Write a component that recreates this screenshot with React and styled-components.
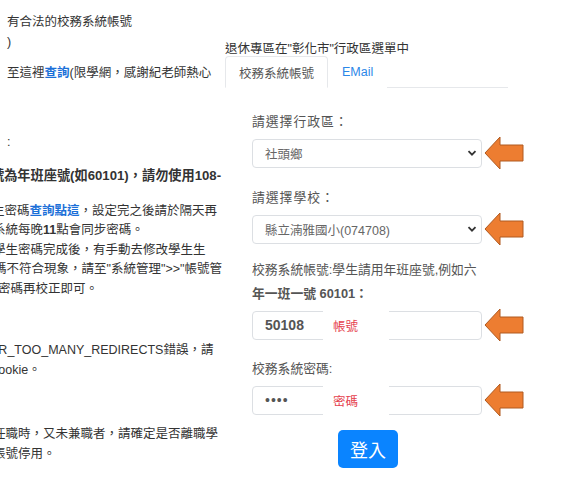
import styled, { createGlobalStyle } from "styled-components";

const GlobalStyle = createGlobalStyle`
  html, body {
    margin: 0;
    padding: 0;
    background: #fff;
  }
  body {
    font-family: "Liberation Sans", "Noto Sans CJK TC", sans-serif;
    color: #333;
  }
`;

const Page = styled.div`
  display: flex;
  width: 576px;
  height: 483px;
  overflow: hidden;
`;

const Notes = styled.div`
  width: 225px;
  flex: none;
  padding: 13px 0 0 7px;
  box-sizing: border-box;
  font-size: 12.5px;
  color: #333;
`;

const Para = styled.div`
  margin-top: ${(p) => p.$gap || 0}px;
`;

const Line = styled.div`
  white-space: nowrap;
  height: 19.5px;
  line-height: 19.5px;
  margin-left: ${(p) => p.$shift || 0}px;
  font-size: ${(p) => p.$size || 12.5}px;
  font-weight: ${(p) => (p.$bold ? 700 : 400)};
`;

const Link = styled.span`
  color: #1a6fd8;
  font-weight: 700;
`;

const Panel = styled.div`
  width: 300px;
  flex: none;
  padding-top: 43px;
`;

const Hint = styled.div`
  font-size: 12.5px;
  height: 13px;
  line-height: 13px;
  color: #333;
`;

const Tabs = styled.ul`
  display: flex;
  list-style: none;
  margin: 0;
  padding: 0;
  width: 283px;
  border-bottom: 1px solid #e6e8eb;
`;

const Tab = styled.li`
  height: 30px;
  padding: 0 13px;
  display: flex;
  align-items: center;
  font-size: 12.5px;
  margin-bottom: -1px;
  border: 1px solid ${(p) => (p.$active ? "#e6e8eb" : "transparent")};
  border-bottom-color: ${(p) => (p.$active ? "#fff" : "transparent")};
  border-radius: 4px 4px 0 0;
  color: ${(p) => (p.$active ? "#555" : "#2b87e8")};
  background: #fff;
`;

const Form = styled.form`
  padding: 22px 0 0 27px;
  display: flex;
  flex-direction: column;
`;

const Label = styled.div`
  font-size: 12.8px;
  color: #555;
  letter-spacing: ${(p) => p.$spaced || 0}px;
  margin-top: ${(p) => p.$gap || 0}px;
  margin-bottom: 2px;
`;

const LabelLine = styled.div`
  height: 24px;
  line-height: 24px;
  white-space: nowrap;
  font-weight: ${(p) => (p.$bold ? 700 : 400)};
`;

const Row = styled.div`
  display: flex;
  align-items: center;
  gap: 2px;
`;

const Field = styled.div`
  position: relative;
  width: 230px;
  height: 29px;
  box-sizing: border-box;
  border: 1px solid #dcdfe3;
  border-radius: 4px;
  background: #fff;
  display: flex;
  align-items: center;
  padding: 0 4px 0 12px;
  font-size: ${(p) => (p.$big ? 14 : 12.5)}px;
  color: ${(p) => (p.$big ? "#555" : "#666")};
`;

const Value = styled.span`
  flex: 1;
  font-weight: ${(p) => (p.$bold ? 700 : 400)};
  letter-spacing: ${(p) => (p.$dots ? 1 : 0)}px;
`;

const Tag = styled.span`
  position: absolute;
  left: 70px;
  top: -4px;
  bottom: -4px;
  width: 66px;
  background: #fff;
  color: #e5414d;
  font-size: 12.5px;
  display: flex;
  align-items: center;
  padding-left: 10px;
  box-sizing: border-box;
`;

const Submit = styled.button`
  align-self: flex-start;
  margin: 13px 0 0 86px;
  width: 60px;
  height: 38px;
  border: none;
  border-radius: 5px;
  background: #0a84ff;
  color: #fff;
  font-size: 18px;
  font-family: "Liberation Sans", "Noto Sans CJK TC", sans-serif;
`;

function Chevron() {
  return (
    <svg width="10" height="10" viewBox="0 0 10 10">
      <path d="M1.5 3.2 L5 6.7 L8.5 3.2" fill="none" stroke="#333" strokeWidth="1.8" />
    </svg>
  );
}

function Arrow() {
  return (
    <svg width="40" height="34" viewBox="0 0 40 34">
      <path
        d="M1 17 L16 1 L16 9 L39 9 L39 25 L16 25 L16 33 Z"
        fill="#ed7d31"
        stroke="#b05a20"
        strokeWidth="1"
        strokeLinejoin="miter"
      />
    </svg>
  );
}

function InputRow({ children }) {
  return (
    <Row>
      {children}
      <Arrow />
    </Row>
  );
}

export default function App() {
  return (
    <>
      <GlobalStyle />
      <Page>
        <Notes>
          <Line>有合法的校務系統帳號</Line>
          <Line>)</Line>
          <Para $gap={12}>
            <Line>
              至這裡<Link>查詢</Link>(限學網，感謝紀老師熱心
            </Line>
          </Para>
          <Para $gap={49}>
            <Line>:</Line>
          </Para>
          <Para $gap={14}>
            <Line $shift={-16} $size={13.2} $bold>
              號為年班座號(如60101)，請勿使用108-
            </Line>
          </Para>
          <Para $gap={16}>
            <Line $shift={-15}>
              生密碼<Link>查詢點這</Link>，設定完之後請於隔天再
            </Line>
            <Line $shift={-14}>
              系統每晚<b>11</b>點會同步密碼。
            </Line>
            <Line $shift={-14}>學生密碼完成後，有手動去修改學生生</Line>
            <Line $shift={-13}>碼不符合現象，請至"系統管理"&gt;&gt;"帳號管</Line>
            <Line $shift={-9}>密碼再校正即可。</Line>
          </Para>
          <Para $gap={42}>
            <Line $shift={-26}>ERR_TOO_MANY_REDIRECTS錯誤，請</Line>
            <Line $shift={-15}>cookie。</Line>
          </Para>
          <Para $gap={45}>
            <Line $shift={-14}>任職時，又未兼職者，請確定是否離職學</Line>
            <Line $shift={-14}>帳號停用。</Line>
          </Para>
        </Notes>
        <Panel>
          <Hint>退休專區在"彰化市"行政區選單中</Hint>
          <Tabs>
            <Tab $active>校務系統帳號</Tab>
            <Tab>EMail</Tab>
          </Tabs>
          <Form onSubmit={(e) => e.preventDefault()}>
            <Label $spaced={1}>
              <LabelLine>請選擇行政區：</LabelLine>
            </Label>
            <InputRow>
              <Field>
                <Value>社頭鄉</Value>
                <Chevron />
              </Field>
            </InputRow>
            <Label $spaced={1} $gap={16}>
              <LabelLine>請選擇學校：</LabelLine>
            </Label>
            <InputRow>
              <Field>
                <Value>縣立湳雅國小(074708)</Value>
                <Chevron />
              </Field>
            </InputRow>
            <Label $gap={12}>
              <LabelLine>校務系統帳號:學生請用年班座號,例如六</LabelLine>
              <LabelLine $bold>年一班一號 60101：</LabelLine>
            </Label>
            <InputRow>
              <Field $big>
                <Value $bold>50108</Value>
                <Tag>帳號</Tag>
              </Field>
            </InputRow>
            <Label $gap={15}>
              <LabelLine>校務系統密碼:</LabelLine>
            </Label>
            <InputRow>
              <Field $big>
                <Value $dots>••••</Value>
                <Tag>密碼</Tag>
              </Field>
            </InputRow>
            <Submit type="submit">登入</Submit>
          </Form>
        </Panel>
      </Page>
    </>
  );
}
